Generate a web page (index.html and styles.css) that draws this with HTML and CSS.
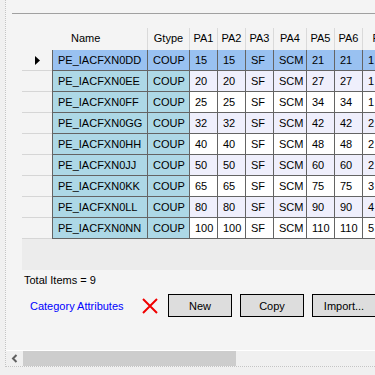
FILE: index.html
```html
<!DOCTYPE html>
<html lang="en">
<head>
<meta charset="UTF-8">
<title>Category Attributes</title>
<link rel="stylesheet" href="styles.css">
</head>
<body>
<div class="panel">
    <div class="rule"></div>

    <!-- attribute grid -->
    <div class="grid">
        <div class="grid-row grid-head">
            <div class="hcell"></div>
            <div class="hcell hname">Name</div>
            <div class="hcell">Gtype</div>
            <div class="hcell">PA1</div>
            <div class="hcell">PA2</div>
            <div class="hcell">PA3</div>
            <div class="hcell">PA4</div>
            <div class="hcell">PA5</div>
            <div class="hcell">PA6</div>
            <div class="hcell">PA7</div>
        </div>

        <div class="grid-row selected">
            <div class="rhead"><svg width="5" height="9" viewBox="0 0 5 9"><polygon points="0,0 5,4.5 0,9" fill="#000"/></svg></div>
            <div class="cell name">PE_IACFXN0DD</div><div class="cell key">COUP</div>
            <div class="cell">15</div><div class="cell">15</div><div class="cell">SF</div><div class="cell">SCM</div><div class="cell">21</div><div class="cell">21</div><div class="cell">1</div>
        </div>
        <div class="grid-row alt">
            <div class="rhead"></div>
            <div class="cell name">PE_IACFXN0EE</div><div class="cell key">COUP</div>
            <div class="cell">20</div><div class="cell">20</div><div class="cell">SF</div><div class="cell">SCM</div><div class="cell">27</div><div class="cell">27</div><div class="cell">1</div>
        </div>
        <div class="grid-row">
            <div class="rhead"></div>
            <div class="cell name">PE_IACFXN0FF</div><div class="cell key">COUP</div>
            <div class="cell">25</div><div class="cell">25</div><div class="cell">SF</div><div class="cell">SCM</div><div class="cell">34</div><div class="cell">34</div><div class="cell">1</div>
        </div>
        <div class="grid-row alt">
            <div class="rhead"></div>
            <div class="cell name">PE_IACFXN0GG</div><div class="cell key">COUP</div>
            <div class="cell">32</div><div class="cell">32</div><div class="cell">SF</div><div class="cell">SCM</div><div class="cell">42</div><div class="cell">42</div><div class="cell">2</div>
        </div>
        <div class="grid-row">
            <div class="rhead"></div>
            <div class="cell name">PE_IACFXN0HH</div><div class="cell key">COUP</div>
            <div class="cell">40</div><div class="cell">40</div><div class="cell">SF</div><div class="cell">SCM</div><div class="cell">48</div><div class="cell">48</div><div class="cell">2</div>
        </div>
        <div class="grid-row alt">
            <div class="rhead"></div>
            <div class="cell name">PE_IACFXN0JJ</div><div class="cell key">COUP</div>
            <div class="cell">50</div><div class="cell">50</div><div class="cell">SF</div><div class="cell">SCM</div><div class="cell">60</div><div class="cell">60</div><div class="cell">2</div>
        </div>
        <div class="grid-row">
            <div class="rhead"></div>
            <div class="cell name">PE_IACFXN0KK</div><div class="cell key">COUP</div>
            <div class="cell">65</div><div class="cell">65</div><div class="cell">SF</div><div class="cell">SCM</div><div class="cell">75</div><div class="cell">75</div><div class="cell">3</div>
        </div>
        <div class="grid-row alt">
            <div class="rhead"></div>
            <div class="cell name">PE_IACFXN0LL</div><div class="cell key">COUP</div>
            <div class="cell">80</div><div class="cell">80</div><div class="cell">SF</div><div class="cell">SCM</div><div class="cell">90</div><div class="cell">90</div><div class="cell">4</div>
        </div>
        <div class="grid-row">
            <div class="rhead"></div>
            <div class="cell name">PE_IACFXN0NN</div><div class="cell key">COUP</div>
            <div class="cell">100</div><div class="cell">100</div><div class="cell">SF</div><div class="cell">SCM</div><div class="cell">110</div><div class="cell">110</div><div class="cell">5</div>
        </div>
    </div>

    <div class="total">Total Items = 9</div>

    <div class="actions">
        <span class="cat-link">Category Attributes</span>
        <svg class="del-icon" width="16" height="16" viewBox="0 0 16 16">
            <path d="M1 1 L15 15 M15 1 L1 15" stroke="#f00000" stroke-width="2" fill="none"/>
        </svg>
        <button class="btn">New</button>
        <button class="btn">Copy</button>
        <button class="btn">Import...</button>
    </div>

    <div class="spacer"></div>

    <!-- horizontal scrollbar -->
    <div class="hscroll">
        <div class="hscroll-btn">
            <svg width="7" height="9" viewBox="0 0 7 9"><path d="M5.5 1 L2 4.5 L5.5 8" stroke="#606060" stroke-width="2" fill="none"/></svg>
        </div>
        <div class="hscroll-thumb"></div>
    </div>
</div>
</body>
</html>
```

FILE: styles.css
```css
body {
    margin: 0;
    background: #f0f0f0;
    font-family: 'Liberation Sans', Arial, sans-serif;
    font-size: 11px;
    color: #000;
    overflow: hidden;
}

.panel {
    margin-left: 5px;
    height: 367px;
    box-sizing: border-box;
    padding-top: 13px;
    border-left: 1px dotted #c4c4c4;
    border-bottom: 1px dotted #c4c4c4;
    background: #f4f4f4;
    display: flex;
    flex-direction: column;
    overflow: hidden;
}

.rule {
    height: 1px;
    margin-left: 6px;
    background: #a0a0a0;
    flex: none;
}

/* grid */
.grid {
    margin: 14px 0 0 16px;
    height: 242px;
    width: 400px;
    background: #ececec;
    flex: none;
}

.grid-row {
    display: grid;
    grid-template-columns: 30px 96px 42px 28px 28px 28px 33px 28px 28px 40px;
    height: 21px;
}

.grid-head {
    height: 22px;
    background: #f4f4f4;
}

.hcell {
    box-sizing: border-box;
    border-right: 1px solid #dadada;
    line-height: 21px;
    text-align: center;
    white-space: nowrap;
    overflow: hidden;
}

.hcell:first-child {
    border-right: none;
}

.hcell.hname {
    text-align: left;
    padding-left: 18px;
    border-left: 1px solid transparent;
}

.rhead {
    background: #f4f4f4;
    border-bottom: 1px solid #d6d6d6;
    display: flex;
    align-items: center;
    padding-left: 13px;
}

.cell {
    box-sizing: border-box;
    background: #fff;
    border-right: 1px solid #646464;
    border-bottom: 1px solid #646464;
    line-height: 20px;
    padding-left: 5px;
    white-space: nowrap;
    overflow: hidden;
}

.cell.name {
    border-left: 1px solid #646464;
}

.cell.name,
.cell.key {
    background: #add8e6;
}

.grid-row.alt .cell {
    background: #efeffc;
}

.grid-row.alt .cell.name,
.grid-row.alt .cell.key {
    background: #add8e6;
}

.grid-row.selected .cell {
    background: #99c1f1;
}

/* bottom */
.total {
    margin: 3px 0 0 18px;
    line-height: 14px;
    flex: none;
}

.actions {
    display: flex;
    align-items: center;
    margin: 7px 0 0 24px;
    height: 23px;
    flex: none;
}

.cat-link {
    color: #0000ff;
    width: 112px;
    flex: none;
    white-space: nowrap;
}

.del-icon {
    margin-right: 10px;
    flex: none;
}

.btn {
    width: 64px;
    height: 23px;
    margin-right: 8px;
    flex: none;
    background: #dddddd;
    border: 1px solid #000;
    border-radius: 0;
    padding: 0;
    font-family: 'Liberation Sans', Arial, sans-serif;
    font-size: 11px;
    color: #000;
}

.spacer {
    flex: 1;
}

.hscroll {
    border-top: 1px solid #fff;
    height: 15px;
    background: #f0f0f0;
    display: flex;
    flex: none;
}

.hscroll-btn {
    width: 17px;
    display: flex;
    align-items: center;
    justify-content: center;
}

.hscroll-thumb {
    width: 213px;
    background: #cdcdcd;
}
```
